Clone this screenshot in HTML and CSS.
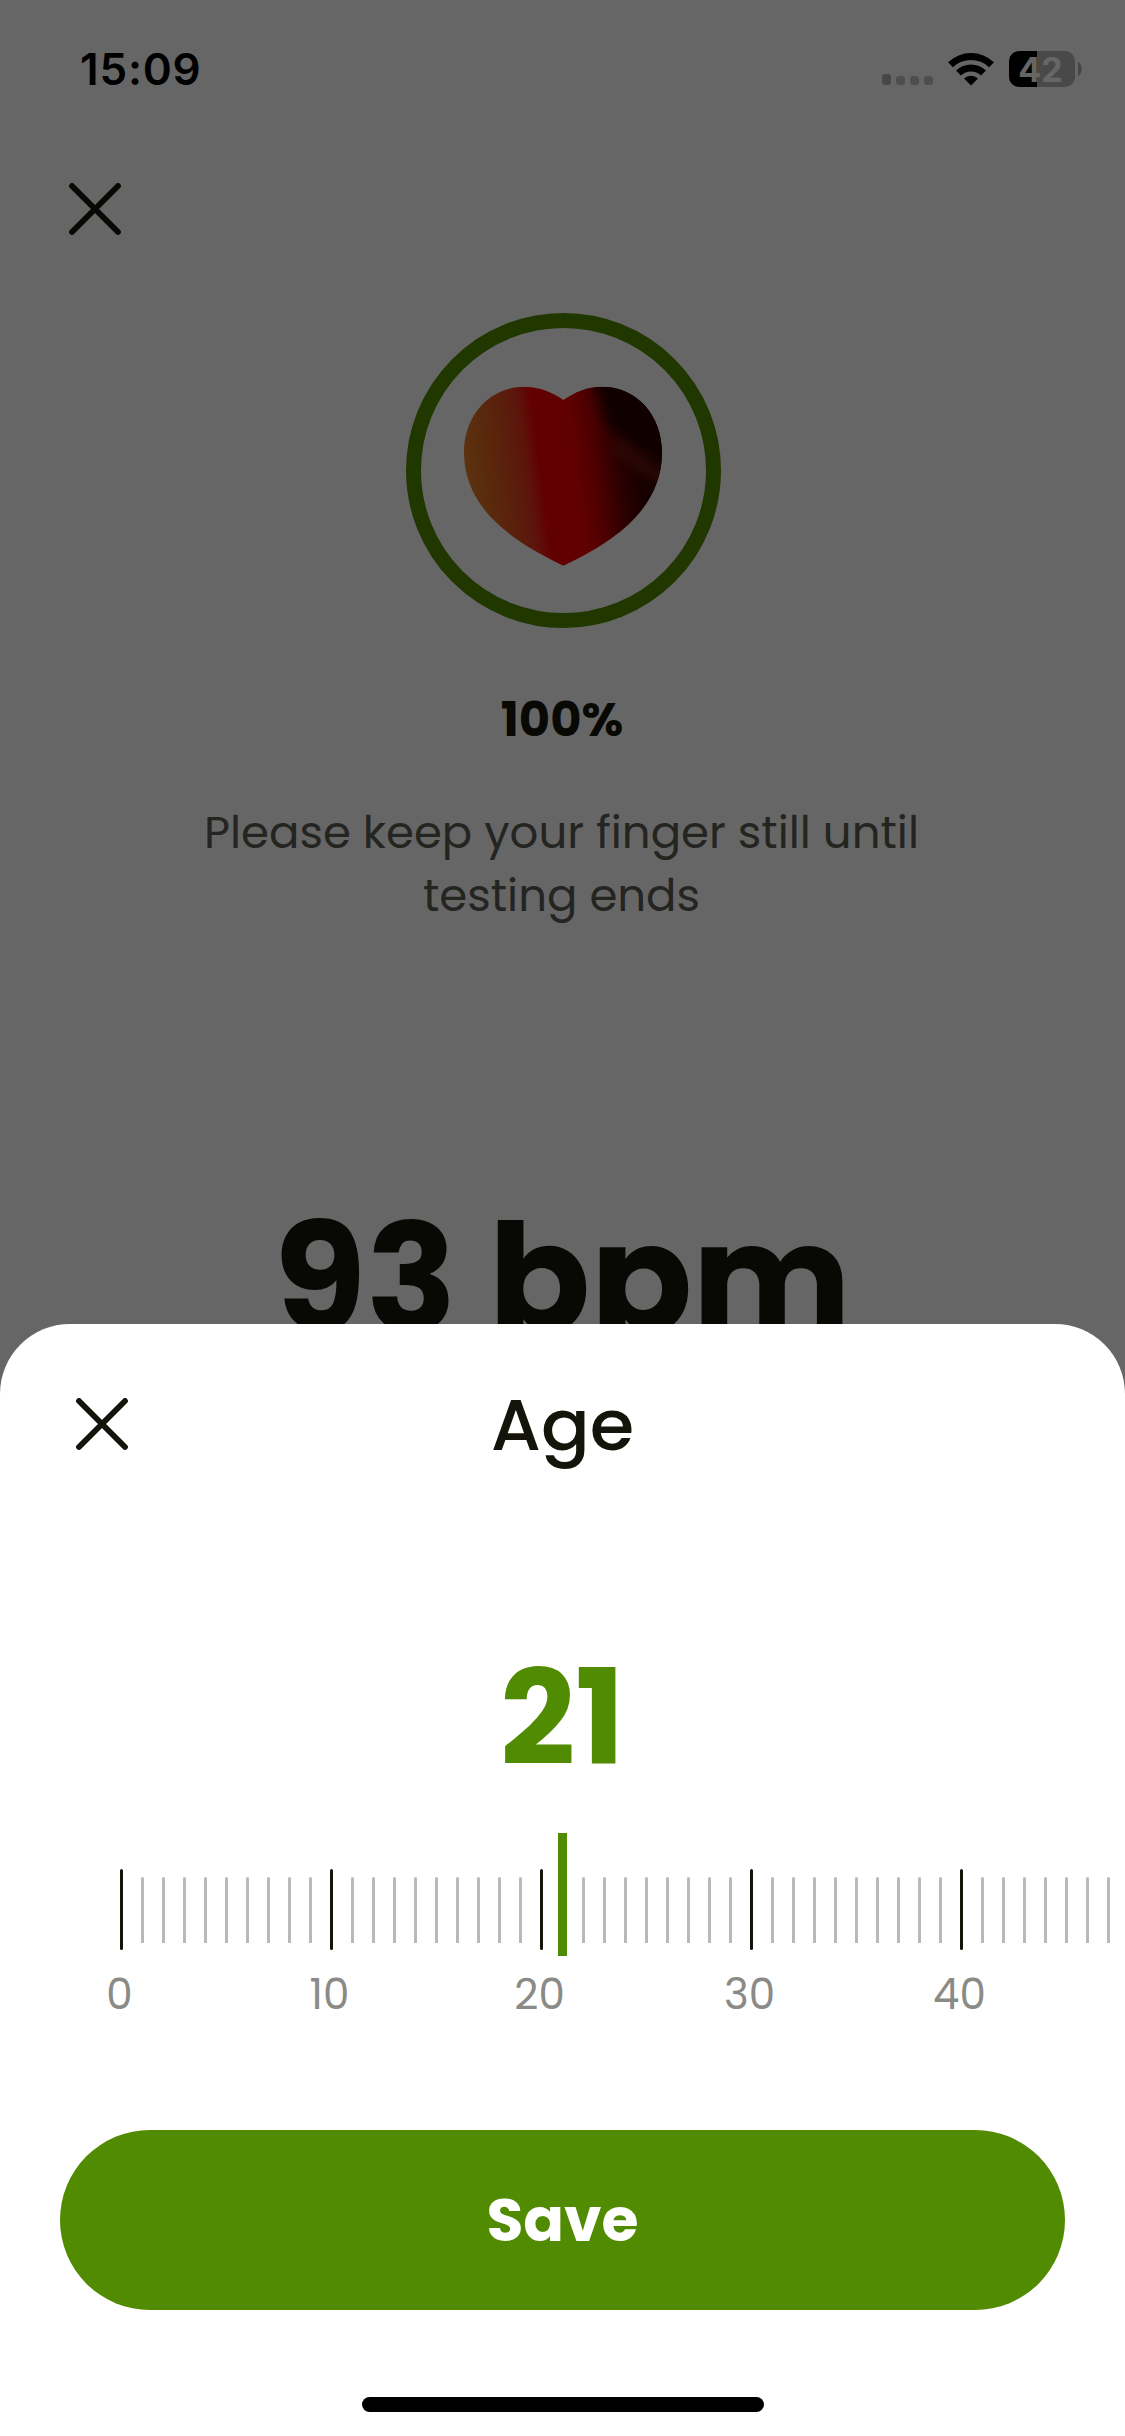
FILE: index.html
```html
<!DOCTYPE html>
<html lang="en">
<head>
<meta charset="utf-8">
<title>Heart rate</title>
<link rel="stylesheet" href="styles.css">
</head>
<body>
<main class="screen">
  <header class="status">
    <span class="time">15:09</span>
    <div class="dots"><i></i><i></i><i></i><i></i></div>
    <svg class="wifi" width="46" height="34" viewBox="0 0 46 34">
      <path d="M0 10.3A33 33 0 0 1 46 10.3L41 15.2A26 26 0 0 0 5 15.2Z"/>
      <path d="M8 18.5A21.5 21.5 0 0 1 38 18.5L33 23.4A14.5 14.5 0 0 0 13 23.4Z"/>
      <path d="M16 26.5A10 10 0 0 1 30 26.5L23 33.5Z"/>
    </svg>
    <div class="battery">42</div>
    <svg class="nub" width="4" height="14" viewBox="0 0 4 14"><path d="M0 0C5 2 5 12 0 14Z"/></svg>
  </header>
  <svg class="close" width="52" height="52" viewBox="0 0 52 52"><path d="M3 3L49 49M49 3L3 49"/></svg>
  <div class="ring">
    <svg width="198" height="180" viewBox="222 258 594 540">
      <defs>
        <linearGradient id="blood" gradientUnits="userSpaceOnUse" x1="225" y1="540" x2="810" y2="465">
          <stop offset="0" stop-color="#e8802a"/>
          <stop offset=".1" stop-color="#e06c20"/>
          <stop offset=".24" stop-color="#e04c20"/>
          <stop offset=".32" stop-color="#e8321c"/>
          <stop offset=".39" stop-color="#f40000"/>
          <stop offset=".57" stop-color="#f00000"/>
          <stop offset=".68" stop-color="#b80000"/>
          <stop offset=".8" stop-color="#600400"/>
          <stop offset=".92" stop-color="#300000"/>
          <stop offset="1" stop-color="#280000"/>
        </linearGradient>
        <filter id="soft" x="-50%" y="-50%" width="200%" height="200%"><feGaussianBlur stdDeviation="18"/></filter>
        <clipPath id="heart"><path d="M520 300C485 275 445 260 403 260C300 260 222 345 222 457C222 603 330 708 520 797C712 708 816 603 816 457C816 345 740 260 635 260C592 260 555 276 520 300Z"/></clipPath>
      </defs>
      <g clip-path="url(#heart)">
        <rect x="222" y="258" width="594" height="540" fill="url(#blood)"/>
        <path d="M605 220L860 220L860 540L780 500L655 375Z" fill="#2a0400" filter="url(#soft)"/>
        <path d="M670 430L830 545" stroke="#74180f" stroke-width="54" opacity=".75" filter="url(#soft)"/>
      </g>
    </svg>
  </div>
  <p class="percent">100%</p>
  <p class="hint">Please keep your finger still until<br>testing ends</p>
  <p class="bpm">93 bpm</p>
</main>
<div class="scrim"></div>
<section class="sheet">
  <header class="sheet-head">
    <svg class="close" width="52" height="52" viewBox="0 0 52 52"><path d="M3 3L49 49M49 3L3 49"/></svg>
    <h1>Age</h1>
  </header>
  <p class="value">21</p>
  <div class="ruler">
    <div class="decade"><div class="ticks"><i></i><i></i><i></i><i></i><i></i><i></i><i></i><i></i><i></i><i></i></div><span>0</span></div>
    <div class="decade"><div class="ticks"><i></i><i></i><i></i><i></i><i></i><i></i><i></i><i></i><i></i><i></i></div><span>10</span></div>
    <div class="decade"><div class="ticks"><i></i><i class="current"></i><i></i><i></i><i></i><i></i><i></i><i></i><i></i><i></i></div><span>20</span></div>
    <div class="decade"><div class="ticks"><i></i><i></i><i></i><i></i><i></i><i></i><i></i><i></i><i></i><i></i></div><span>30</span></div>
    <div class="decade"><div class="ticks"><i></i><i></i><i></i><i></i><i></i><i></i><i></i><i></i></div><span>40</span></div>
  </div>
  <button class="save">Save</button>
  <div class="home"></div>
</section>
</body>
</html>
```
FILE: styles.css
```css
* { box-sizing: border-box; }
body {
  margin: 0;
  position: relative;
  width: 1125px;
  height: 2436px;
  overflow: hidden;
  background: #fff;
  color: #14140a;
  font-family: Poppins, Inter, "Liberation Sans", sans-serif;
}
p, h1 { margin: 0; white-space: nowrap; }
.screen {
  height: 1400px;
  overflow: hidden;
  display: flex;
  flex-direction: column;
  align-items: center;
}
.status {
  width: 100%;
  height: 87px;
  padding: 0 43px 0 80px;
  display: flex;
  align-items: flex-end;
  flex: none;
}
.time {
  margin-right: auto;
  color: #000;
  font: 600 44px/54px Inter, sans-serif;
  letter-spacing: .8px;
  height: 45px;
}
.dots { display: flex; align-items: flex-end; gap: 5px; margin: 0 15px 2px 0; }
.dots i { width: 9px; height: 9px; border-radius: 3px; background: #c4c4c4; }
.dots i:first-child { height: 11px; background: #b2b2b2; }
.wifi { margin: 0 15px 1px 0; }
.battery {
  width: 66px;
  height: 36px;
  margin-right: 3px;
  padding-right: 3px;
  border-radius: 10px;
  background: linear-gradient(90deg, #000 28px, #b6b6b6 28px);
  color: #fff;
  font: 700 34px/37px Inter, sans-serif;
  text-align: center;
}
.nub { margin-bottom: 11px; fill: #b0b0b0; }
.close { flex: none; fill: none; stroke: #14140a; stroke-width: 5.8; stroke-linecap: round; }
.screen > .close { align-self: flex-start; margin: 95.5px 0 0 68.5px; }
.ring {
  width: 315px;
  height: 315px;
  flex: none;
  margin: 78.5px 0 0 1px;
  border: 15px solid #518b02;
  border-radius: 50%;
  display: flex;
  justify-content: center;
  padding-top: 58px;
}
.percent { margin: 62px 1px 0 0; font-size: 48px; line-height: 60px; font-weight: 700; }
.hint { margin: 51px 2px 0 0; text-align: center; color: #5a5a54; font-size: 45px; line-height: 63px; }
.bpm { margin-top: 247px; font-size: 150px; line-height: 210px; font-weight: 700; }
.scrim { position: absolute; inset: 0; background: rgba(0, 0, 0, .6); }
.sheet {
  position: absolute;
  left: 0;
  right: 0;
  bottom: 0;
  height: 1112px;
  overflow: hidden;
  background: #fff;
  border-radius: 70px 70px 0 0;
  display: flex;
  flex-direction: column;
  align-items: center;
}
.sheet-head {
  width: 100%;
  height: 200px;
  padding: 0 76px;
  display: grid;
  grid-template-columns: 52px 1fr 52px;
  align-items: center;
}
h1 { text-align: center; font-size: 72px; line-height: 100px; font-weight: 500; margin-top: 2px; }
.value { margin-top: 114px; color: #518b02; font-size: 132px; line-height: 160px; font-weight: 700; }
.ruler { align-self: stretch; display: flex; padding-left: 111px; margin-top: 35px; height: 190px; }
.decade { flex: none; width: 210px; }
.ticks { display: flex; align-items: center; height: 123px; padding-top: 30px; }
.ticks i { flex: none; width: 3px; height: 66px; margin: 0 9px; border-radius: 1.5px 1.5px 0 0; background: #b9b9b8; }
.ticks i:first-child { height: 81px; border-radius: 1.5px; background: #14140a; }
.ticks .current { width: 9px; height: 123px; margin: -30px 6px 0; border-radius: 0; background: #518b02; }
.decade span { width: 17px; margin-top: 14px; display: flex; justify-content: center; color: #8a8a87; font-size: 42px; line-height: 50px; }
.save {
  width: 1005px;
  height: 180px;
  margin-top: 107px;
  border: 0;
  border-radius: 90px;
  background: #518b02;
  color: #fff;
  font: inherit;
  font-size: 60px;
  font-weight: 700;
  flex: none;
}
.home { width: 402px; height: 15px; margin-top: 87px; border-radius: 8px; background: #000; flex: none; }
```
